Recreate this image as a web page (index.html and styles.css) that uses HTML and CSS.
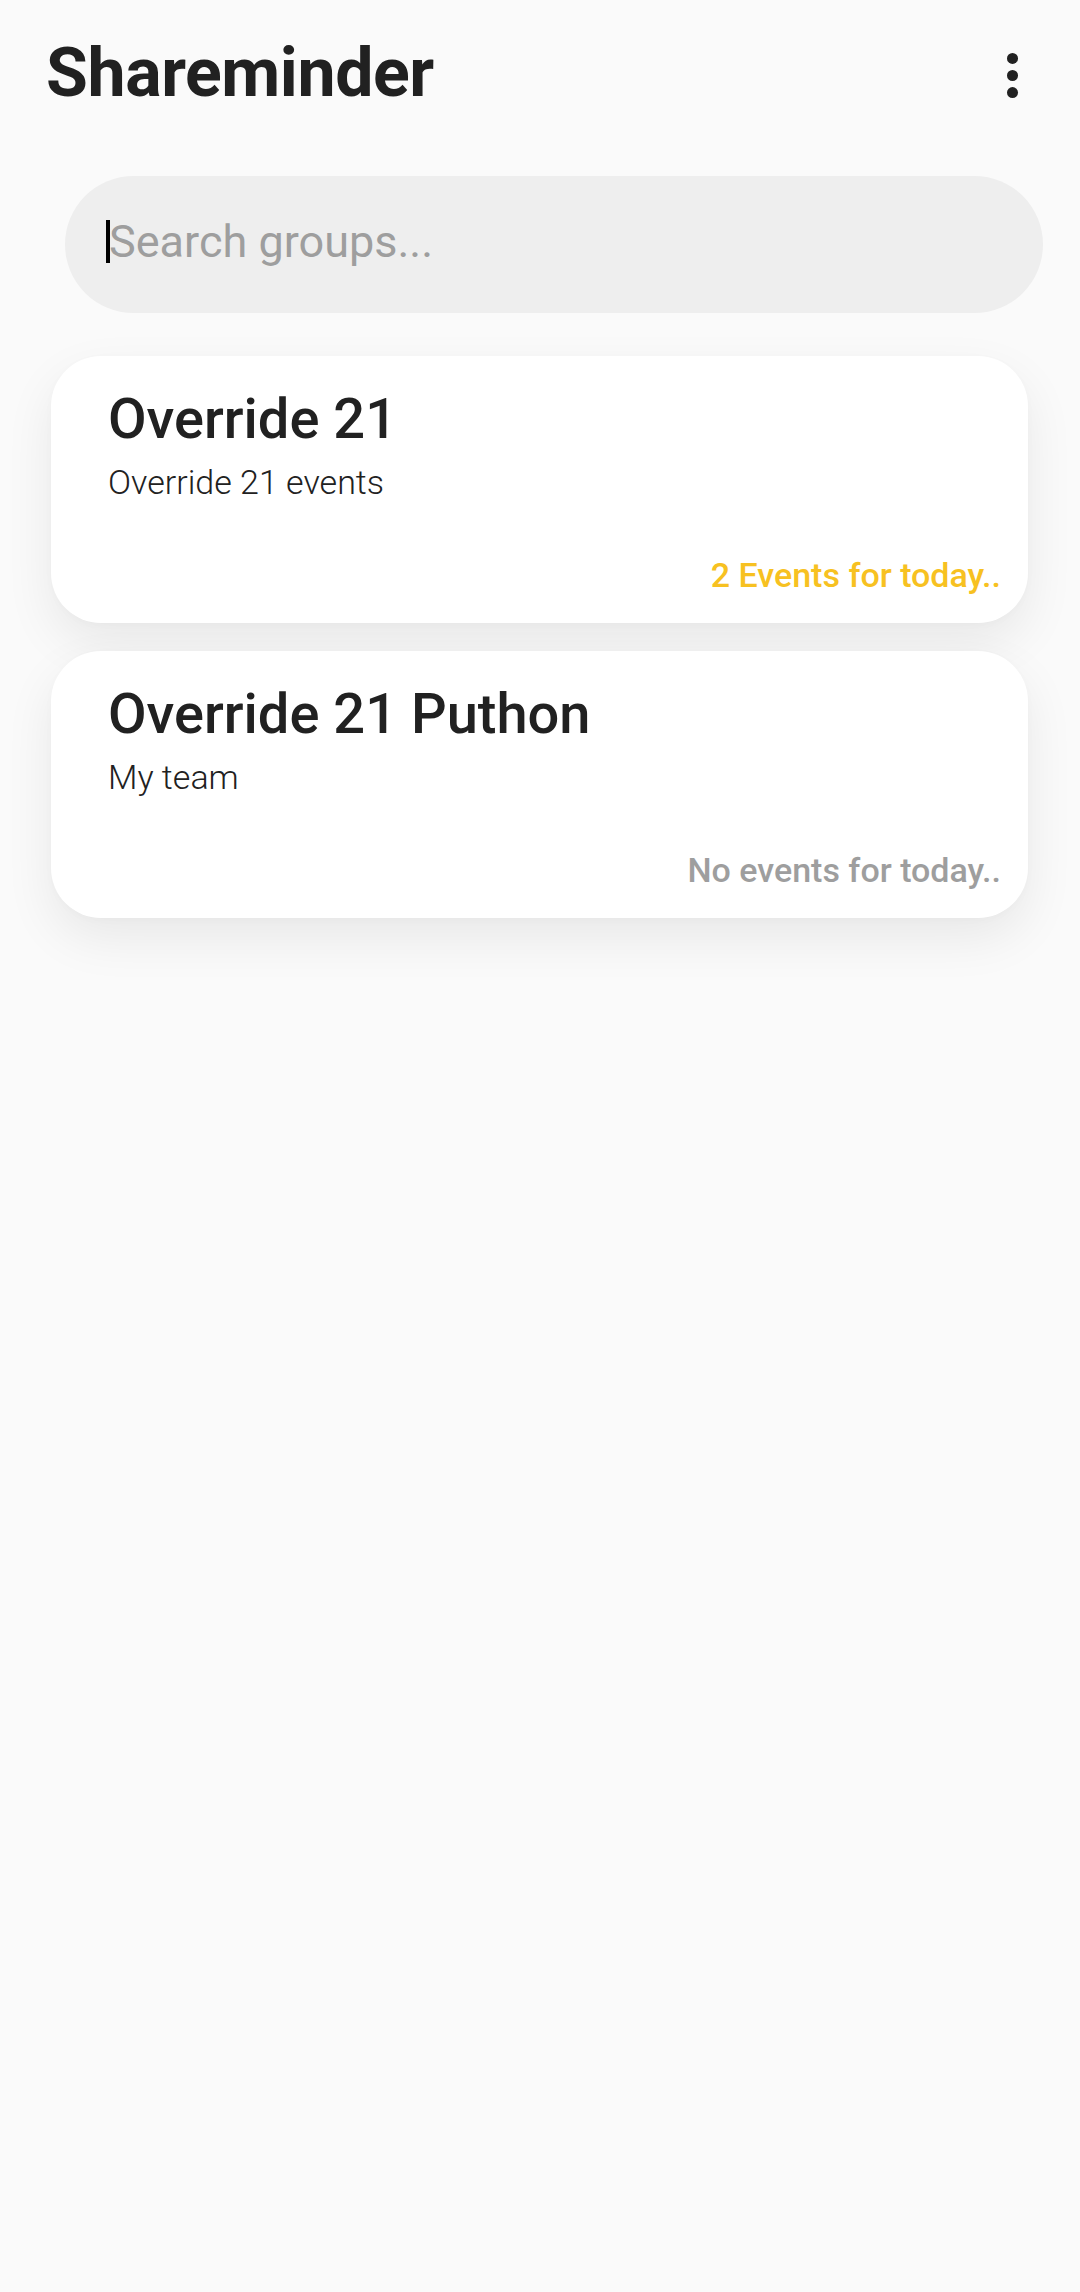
FILE: index.html
```html
<!DOCTYPE html>
<html lang="en">
<head>
<meta charset="utf-8">
<title>Shareminder</title>
<link rel="stylesheet" href="styles.css">
</head>
<body>
  <div class="app">
    <header class="topbar">
      <h1 class="app-title">Shareminder</h1>
      <button class="menu-btn" aria-label="More options">
        <svg viewBox="0 0 24 24" width="63" height="63">
          <circle cx="12" cy="5.5" r="2.1" fill="#212121"/>
          <circle cx="12" cy="12" r="2.1" fill="#212121"/>
          <circle cx="12" cy="18.5" r="2.1" fill="#212121"/>
        </svg>
      </button>
    </header>

    <div class="search">
      <span class="caret"></span>
      <span class="search-placeholder">Search groups...</span>
    </div>

    <main class="group-list">
      <article class="group-card">
        <h2 class="group-name">Override 21</h2>
        <p class="group-desc">Override 21 events</p>
        <p class="group-status status-active">2 Events for today..</p>
      </article>
      <article class="group-card">
        <h2 class="group-name">Override 21 Puthon</h2>
        <p class="group-desc">My team</p>
        <p class="group-status status-none">No events for today..</p>
      </article>
    </main>
  </div>
</body>
</html>
```
FILE: styles.css
```css
* {
  box-sizing: border-box;
}

html, body {
  margin: 0;
  padding: 0;
  background: #fafafa;
}

body {
  font-family: Roboto, "Noto Sans", "Liberation Sans", sans-serif;
  color: #212121;
  min-height: 2292px;
}

.app {
  display: flex;
  flex-direction: column;
}

.topbar {
  display: flex;
  align-items: center;
  justify-content: space-between;
  padding: 33px 36px 0 46px;
}

.app-title {
  margin: 0;
  font-size: 68px;
  line-height: 80px;
  font-weight: 700;
  color: #212121;
  letter-spacing: -0.4px;
}

.menu-btn {
  width: 63px;
  height: 63px;
  padding: 0;
  margin-top: 4px;
  border: 0;
  background: transparent;
  display: flex;
  align-items: center;
  justify-content: center;
}

.menu-btn svg {
  display: block;
}

.search {
  margin: 63px 37px 0 65px;
  height: 137px;
  border-radius: 69px;
  background: #eeeeee;
  display: flex;
  align-items: center;
  padding: 0 0 6px 41px;
}

.caret {
  width: 4px;
  height: 43px;
  background: #000;
  flex: none;
}

.search-placeholder {
  font-size: 45px;
  line-height: 52px;
  color: #9e9e9e;
  font-weight: 400;
  margin-left: -1px;
}

.group-list {
  display: flex;
  flex-direction: column;
  gap: 28px;
  margin: 43px 52px 0 51px;
}

.group-card {
  background: #ffffff;
  border-radius: 50px;
  padding: 31px 27px 28px 57px;
  box-shadow: 0 20px 50px rgba(0, 0, 0, 0.075), 0 2px 8px rgba(0, 0, 0, 0.02);
  display: flex;
  flex-direction: column;
}

.group-name {
  margin: 0;
  font-size: 56px;
  line-height: 64px;
  font-weight: 500;
  color: #212121;
}

.group-desc {
  margin: 11px 0 0;
  font-size: 34px;
  line-height: 40px;
  font-weight: 300;
  color: #212121;
}

.group-status {
  margin: 53px 0 0;
  font-size: 34px;
  line-height: 40px;
  font-weight: 500;
  text-align: right;
}

.status-active {
  color: #f7c121;
}

.status-none {
  color: #9e9e9e;
}
```
